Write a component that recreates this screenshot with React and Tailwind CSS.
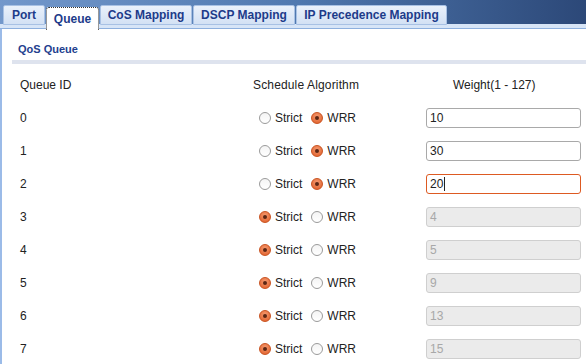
import React from "react";

const rows = [
  { id: 0, algo: "wrr", w: "10", disabled: false },
  { id: 1, algo: "wrr", w: "30", disabled: false },
  { id: 2, algo: "wrr", w: "20", disabled: false, focus: true },
  { id: 3, algo: "strict", w: "4", disabled: true },
  { id: 4, algo: "strict", w: "5", disabled: true },
  { id: 5, algo: "strict", w: "9", disabled: true },
  { id: 6, algo: "strict", w: "13", disabled: true },
  { id: 7, algo: "strict", w: "15", disabled: true },
];

function Radio({ checked }) {
  if (checked) {
    return (
      <span className="inline-flex items-center justify-center w-[12px] h-[12px] rounded-full border border-[#c9521f] bg-[radial-gradient(circle_at_50%_35%,#f59a70,#de5b25)]">
        <span className="w-[4px] h-[4px] rounded-full bg-[#5b2614]" />
      </span>
    );
  }
  return (
    <span className="inline-block w-[12px] h-[12px] rounded-full border border-[#9a9a9a] bg-[linear-gradient(to_bottom,#f4f4f4,#ffffff)]" />
  );
}

function Tab({ label, active, w }) {
  if (active) {
    return (
      <div className={"h-[23px] mb-[-2px] flex items-center justify-center bg-white border border-dotted border-[#333] border-b-0 rounded-t-[3px] text-[12px] font-bold text-[#1d3b8a] " + w}>
        {label}
      </div>
    );
  }
  return (
    <div className={"h-[20px] mb-[3px] flex items-center justify-center bg-[linear-gradient(to_bottom,#eaf1fb,#d3e1f4)] border border-[#a8c1e4] rounded-t-[2px] text-[12px] font-bold text-[#1d3b8a] " + w}>
      {label}
    </div>
  );
}

export default function App() {
  return (
    <div className="w-[586px] h-[364px] overflow-hidden bg-white text-[12px] text-[#222] font-['Liberation_Sans',Arial,sans-serif]">
      <div className="h-[29px] flex items-end gap-[1px] pl-[3px] border-b border-[#8eb0de] bg-[linear-gradient(to_bottom,transparent_24px,#d7e5f7_24px),linear-gradient(to_right,#7398cb,#5079b0_50%,#2c4878)]">
        <Tab label="Port" w="w-[42px]" />
        <Tab label="Queue" active w="w-[53px]" />
        <Tab label="CoS Mapping" w="w-[92px]" />
        <Tab label="DSCP Mapping" w="w-[102px]" />
        <Tab label="IP Precedence Mapping" w="w-[151px]" />
      </div>
      <div className="border-l-2 border-[#9bbbe8] h-[335px]">
        <div className="pl-[16px] pt-[12px] text-[11px] font-bold text-[#23408e] h-[31px]">QoS Queue</div>
        <div className="ml-[10px] h-[4px] bg-[#dee3ee]" />
        <div className="flex items-center h-[37px] pt-[5px]">
          <div className="w-[251px] pl-[18px]">Queue ID</div>
          <div className="w-[173px] tracking-[0.15px]">Schedule Algorithm</div>
          <div className="pl-[27px]">Weight(1 - 127)</div>
        </div>
        {rows.map((r) => (
          <div key={r.id} className="flex items-center h-[33px]">
            <div className="w-[257px] pl-[18px]">{r.id}</div>
            <div className="w-[167px] flex items-center">
              <Radio checked={r.algo === "strict"} />
              <span className="ml-[4px]">Strict</span>
              <span className="ml-[9px] flex"><Radio checked={r.algo === "wrr"} /></span>
              <span className="ml-[4px]">WRR</span>
            </div>
            <div
              className={
                "w-[155px] h-[20px] rounded-[3px] flex items-center px-[3px] text-[12px] " +
                (r.disabled
                  ? "bg-[#ebebeb] border border-[#cfcfcf] text-[#a8a8a8]"
                  : r.focus
                  ? "bg-white border border-[#dd5a22] text-[#222]"
                  : "bg-white border border-[#a9a9a9] text-[#222]")
              }
            >
              {r.w}
              {r.focus && <span className="w-px h-[14px] bg-[#222] ml-[1px]" />}
            </div>
          </div>
        ))}
      </div>
    </div>
  );
}
